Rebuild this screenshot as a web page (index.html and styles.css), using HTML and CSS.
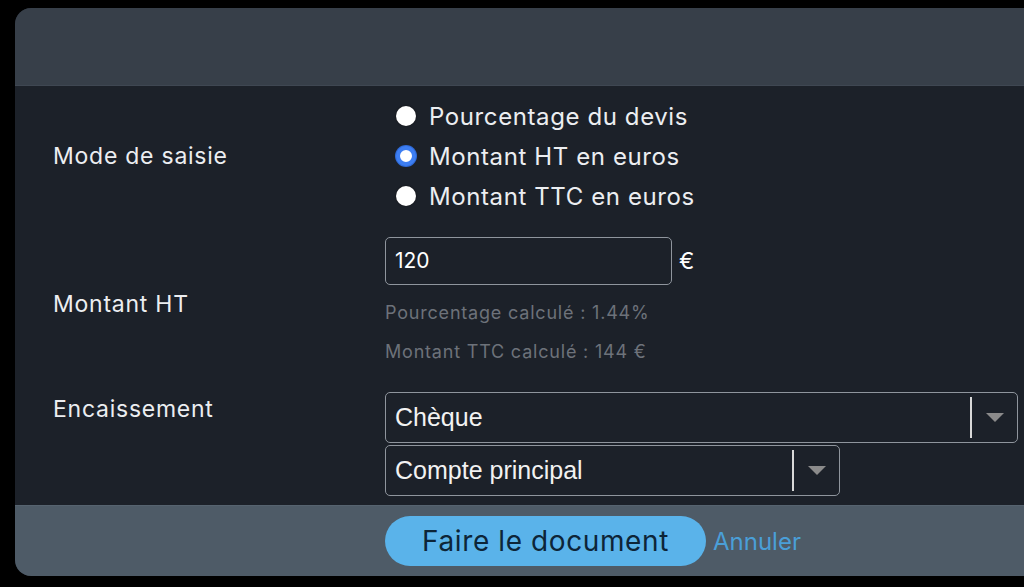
FILE: index.html
```html
<!DOCTYPE html>
<html lang="fr">
<head>
    <meta charset="UTF-8">
    <meta name="viewport" content="width=device-width, initial-scale=1.0">
    <title>Acompte</title>
    <link rel="stylesheet" href="styles.css">
</head>
<body>
    <div class="modal">
        <div class="modal-header"></div>

        <!-- Formulaire -->
        <div class="modal-body">
            <div class="row row-center">
                <div class="label">Mode de saisie</div>
                <div class="control radios">
                    <label class="radio"><span class="dot"></span>Pourcentage du devis</label>
                    <label class="radio"><span class="dot checked"></span>Montant HT en euros</label>
                    <label class="radio"><span class="dot"></span>Montant TTC en euros</label>
                </div>
            </div>

            <div class="row row-center">
                <div class="label">Montant HT</div>
                <div class="control">
                    <div class="amount">
                        <div class="input">120</div>
                        <span class="currency">€</span>
                    </div>
                    <div class="hints">
                        <div class="hint">Pourcentage calculé : 1.44%</div>
                        <div class="hint">Montant TTC calculé : 144 €</div>
                    </div>
                </div>
            </div>

            <div class="row">
                <div class="label label-top">Encaissement</div>
                <div class="control selects">
                    <div class="select select-wide">
                        <span class="select-value">Chèque</span>
                        <span class="select-sep"></span>
                        <span class="select-arrow"></span>
                    </div>
                    <div class="select select-small">
                        <span class="select-value">Compte principal</span>
                        <span class="select-sep"></span>
                        <span class="select-arrow"></span>
                    </div>
                </div>
            </div>
        </div>

        <div class="modal-footer">
            <button class="btn-primary">Faire le document</button>
            <a class="link" href="#">Annuler</a>
        </div>
    </div>
</body>
</html>
```
FILE: styles.css
```css
/* Page */
body {
    margin: 0;
    background-color: #000;
    font-family: Inter, "Noto Sans", sans-serif;
    color: #e8eaed;
    overflow: hidden;
    height: 587px;
}
/* Fenetre modale */
.modal {
    margin: 8px 0 0 15px;
    width: 1040px;
    border-radius: 16px;
    overflow: hidden;
    background-color: #1c2129;
}
.modal-header {
    height: 77px;
    background-color: #373f49;
    border-bottom: 1px solid #3f4752;
}
.modal-body {
    padding: 10px 0 9px 38px;
    display: flex;
    flex-direction: column;
    gap: 21px;
}
.row {
    display: flex;
    align-items: flex-start;
}
.row-center {
    align-items: center;
}
.label {
    width: 332px;
    font-size: 23px;
    letter-spacing: 0.75px;
    color: #eceef1;
}
.label-top {
    padding-top: 3px;
}
/* Boutons radio */
.radio {
    display: flex;
    align-items: center;
    height: 40px;
    font-size: 24px;
    letter-spacing: 0.6px;
    color: #eceef1;
}
.dot {
    width: 20px;
    height: 20px;
    border-radius: 50%;
    background-color: #fff;
    margin: 0 13px 0 11px;
    box-sizing: border-box;
    box-shadow: 0 0 2px rgba(0, 0, 0, 0.6);
}
.dot.checked {
    border: 4px solid #3d7ef2;
    background-color: #fff;
    box-shadow: inset 0 0 0 2px #fff, 0 0 0 1px #2f6ad8;
}
/* Montant */
.amount {
    display: flex;
    align-items: center;
}
.input {
    width: 276px;
    height: 46px;
    border: 1px solid #8f959d;
    border-radius: 5px;
    padding-left: 9px;
    font-size: 21px;
    line-height: 46px;
    color: #fff;
}
.currency {
    margin-left: 7px;
    font-size: 23px;
    color: #fff;
}
.hints {
    padding-top: 8px;
}
.hint {
    height: 39px;
    line-height: 39px;
    font-size: 18px;
    letter-spacing: 0.8px;
    color: #6d727a;
}
/* Listes deroulantes */
.selects {
    display: flex;
    flex-direction: column;
    gap: 2px;
}
.select {
    display: flex;
    align-items: center;
    height: 49px;
    border: 1px solid #8f959d;
    border-radius: 5px;
    font-family: "Liberation Sans", Arial, sans-serif;
    font-size: 25px;
    color: #f2f2f2;
}
.select-wide {
    width: 631px;
}
.select-small {
    width: 453px;
}
.select-value {
    flex: 1;
    padding-left: 9px;
}
.select-sep {
    width: 2px;
    height: 41px;
    background-color: #d8d8d8;
}
.select-arrow {
    width: 0;
    height: 0;
    margin: 0 13px 0 14px;
    border-left: 9px solid transparent;
    border-right: 9px solid transparent;
    border-top: 9px solid #8b8b8b;
}
/* Pied */
.modal-footer {
    display: flex;
    align-items: center;
    gap: 7px;
    height: 70px;
    padding-left: 370px;
    background-color: #4e5b67;
    border-top: 1px solid #56636f;
}
.btn-primary {
    height: 50px;
    width: 321px;
    border: none;
    border-radius: 25px;
    background-color: #5ab3ea;
    color: #0d2538;
    font-family: Inter, "Noto Sans", sans-serif;
    font-size: 28px;
    letter-spacing: 0.6px;
    cursor: pointer;
}
.link {
    color: #4a9fd8;
    font-size: 24px;
    text-decoration: none;
}
```
